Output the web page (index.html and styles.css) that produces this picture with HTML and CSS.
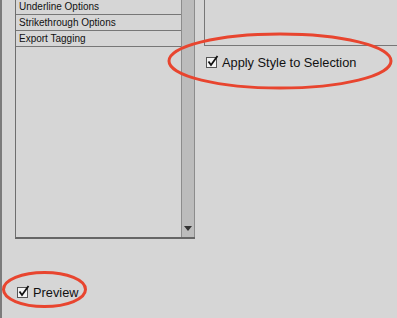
FILE: index.html
```html
<!DOCTYPE html>
<html lang="en">
<head>
<meta charset="UTF-8">
<title>Paragraph Style Options</title>
<link rel="stylesheet" href="styles.css">
</head>
<body>

<div class="dialog">
  <div class="top">
    <div class="listbox">
      <ul class="rows">
        <li>Underline Options</li>
        <li>Strikethrough Options</li>
        <li>Export Tagging</li>
      </ul>
      <div class="scroll">
        <span class="arrow"></span>
      </div>
    </div>

    <div class="right">
      <div class="pane"></div>
      <label class="check apply">
        <span class="box">
          <svg width="13" height="13" viewBox="0 0 13 13"><path d="M2.5 6.5 L5 10 L11.5 1" fill="none" stroke="#111" stroke-width="1.8"/></svg>
        </span>
        Apply Style to Selection
      </label>
    </div>
  </div>

  <label class="check preview">
    <span class="box">
      <svg width="13" height="13" viewBox="0 0 13 13"><path d="M2.5 6.5 L5 10 L11.5 1" fill="none" stroke="#111" stroke-width="1.8"/></svg>
    </span>
    Preview
  </label>
</div>

<!-- annotation marks drawn over the dialog -->
<svg class="marks" width="397" height="318">
  <ellipse cx="280" cy="61" rx="111" ry="27" />
  <ellipse cx="44.5" cy="289.5" rx="41" ry="17" />
</svg>

</body>
</html>
```

FILE: styles.css
```css
body {
  margin: 0;
  width: 397px;
  height: 318px;
  overflow: hidden;
  background-color: #d6d6d6;
  font-family: "Liberation Sans", Arial, sans-serif;
  color: #111;
  position: relative;
}

.dialog {
  height: 318px;
  box-sizing: border-box;
  border-left: 2px solid #7b7b7b;
  display: flex;
  flex-direction: column;
}

.top {
  display: flex;
  height: 239px;
}

.listbox {
  margin-left: 13px;
  width: 180px;
  border-left: 1px solid #6e6e6e;
  border-bottom: 2px solid #666;
  display: flex;
  box-sizing: border-box;
}

.rows {
  list-style: none;
  margin: -1px 0 0 0;
  padding: 0;
  flex: 1;
  font-size: 10px;
}

.rows li {
  height: 16px;
  line-height: 15px;
  padding-left: 3px;
  border-bottom: 1px solid #777;
  box-sizing: border-box;
}

.scroll {
  width: 14px;
  box-sizing: border-box;
  background-color: #bcbcbc;
  border-left: 1px solid #8c8c8c;
  border-right: 1px solid #8c8c8c;
  display: flex;
  align-items: flex-end;
  justify-content: center;
  padding-bottom: 6px;
}

.arrow {
  width: 0;
  height: 0;
  border-left: 4px solid transparent;
  border-right: 4px solid transparent;
  border-top: 5px solid #333;
}

.right {
  flex: 1;
  margin-left: 9px;
  display: flex;
  flex-direction: column;
}

.pane {
  height: 46px;
  box-sizing: border-box;
  border-left: 1px solid #777;
  border-bottom: 1px solid #777;
}

.check {
  display: flex;
  align-items: center;
  gap: 5px;
  font-size: 12.8px;
}

.box {
  width: 11px;
  height: 11px;
  box-sizing: border-box;
  border: 1px solid #555;
  background-color: #f4f4f4;
  position: relative;
}

.box svg {
  position: absolute;
  left: -1px;
  top: -3px;
}

.apply {
  margin-top: 9px;
  margin-left: 2px;
}

.preview {
  margin-top: 46px;
  margin-left: 15px;
}

.marks {
  position: absolute;
  left: 0;
  top: 0;
  pointer-events: none;
}

.marks ellipse {
  fill: none;
  stroke: #e8452f;
  stroke-width: 3;
}
```
